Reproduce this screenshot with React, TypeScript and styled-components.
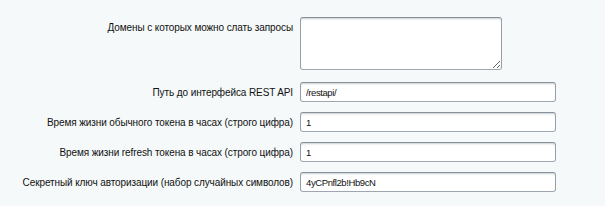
import React from 'react';
import styled, { createGlobalStyle } from 'styled-components';

const GlobalStyle = createGlobalStyle`
  html, body {
    margin: 0;
    padding: 0;
    background: #f5f9f9;
  }
  body {
    font-family: Arial, "Liberation Sans", Helvetica, sans-serif;
    font-size: 10px;
    color: #111;
  }
`;

const Form = styled.div`
  display: grid;
  grid-template-columns: 293px auto;
  column-gap: 7px;
  row-gap: 10px;
  padding-top: 17px;
  align-items: center;
`;

const Label = styled.label<{ $top?: boolean }>`
  text-align: right;
  white-space: nowrap;
  letter-spacing: -0.1px;
  line-height: 13px;
  align-self: ${(p) => (p.$top ? 'start' : 'center')};
  padding-top: ${(p) => (p.$top ? '4px' : '0')};
`;

const fieldBorder = `
  box-sizing: border-box;
  background: #fff;
  border: 1px solid;
  border-color: #87919c #959ea9 #9ea7b1 #959ea9;
  border-radius: 3px;
  box-shadow: 0 1px 0 0 rgba(255,255,255,0.3), inset 0 2px 2px -1px rgba(180,188,191,0.7);
  font-family: Arial, "Liberation Sans", Helvetica, sans-serif;
  font-size: 9.5px;
  letter-spacing: -0.4px;
  color: #111;
  outline: none;
  margin: 0;
  display: block;
`;

const TextArea = styled.textarea`
  ${fieldBorder}
  width: 202px;
  height: 53px;
  padding: 4px 5px;
  margin-bottom: 2px;
`;

const TextInput = styled.input`
  ${fieldBorder}
  width: 256px;
  height: 20px;
  padding: 0 5px;
`;

const fields = [
  { label: 'Путь до интерфейса REST API', value: '/restapi/' },
  { label: 'Время жизни обычного токена в часах (строго цифра)', value: '1' },
  { label: 'Время жизни refresh токена в часах (строго цифра)', value: '1' },
  { label: 'Секретный ключ авторизации (набор случайных символов)', value: '4yCPnfl2b!Hb9cN' },
];

export default function App() {
  return (
    <>
      <GlobalStyle />
      <Form>
        <Label $top htmlFor="domains">Домены с которых можно слать запросы</Label>
        <div>
          <TextArea id="domains" defaultValue="" />
        </div>
        {fields.map((f, i) => (
          <React.Fragment key={i}>
            <Label htmlFor={`f${i}`}>{f.label}</Label>
            <div>
              <TextInput id={`f${i}`} type="text" defaultValue={f.value} />
            </div>
          </React.Fragment>
        ))}
      </Form>
    </>
  );
}
